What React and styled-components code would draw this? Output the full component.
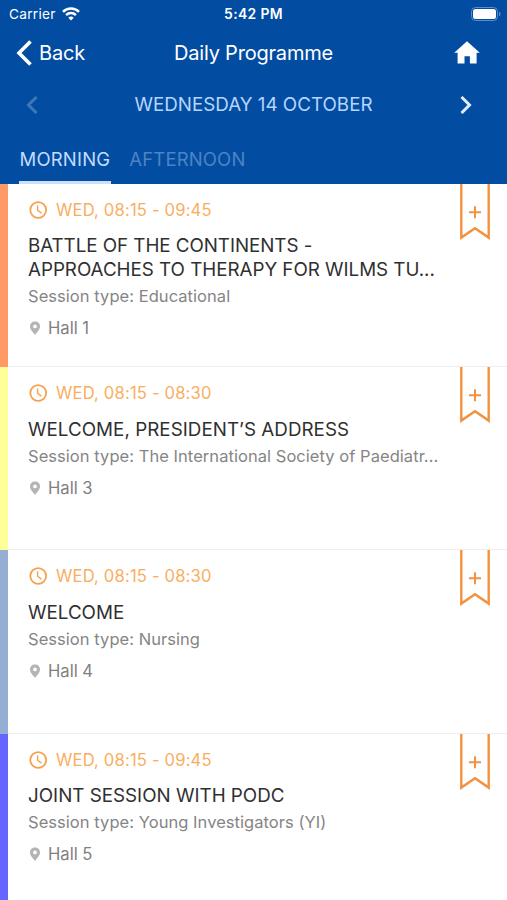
import React from 'react';
import styled, { createGlobalStyle } from 'styled-components';

const GlobalStyle = createGlobalStyle`
  * { box-sizing: border-box; }
  body { margin: 0; background: #fff; font-family: Inter, 'Liberation Sans', sans-serif; }
`;

const Screen = styled.div`
  width: 507px;
  height: 900px;
  overflow: hidden;
  background: #fff;
  display: flex;
  flex-direction: column;
`;

const Header = styled.header`
  height: 184px;
  flex: none;
  background: #024da1;
  color: #fff;
`;

const Bar = styled.div`
  display: grid;
  grid-template-columns: minmax(0, 1fr) auto minmax(0, 1fr);
  align-items: center;
  height: ${(p) => p.$height}px;
`;

const Side = styled.div`
  display: flex;
  align-items: center;
  gap: ${(p) => p.$gap || 0}px;
  justify-content: ${(p) => (p.$end ? 'flex-end' : 'flex-start')};
  padding: 0 ${(p) => p.$inset}px;
`;

const Label = styled.span`
  font-size: ${(p) => p.$size}px;
  font-weight: ${(p) => p.$weight || 400};
  letter-spacing: ${(p) => p.$spacing || 0}px;
  color: ${(p) => p.$color || 'inherit'};
  white-space: nowrap;
  line-height: 24px;
`;

const DateLabel = styled(Label)`
  padding-top: 1px;
`;

const Tabs = styled.nav`
  display: flex;
  gap: 18px;
  height: 53px;
  padding-left: 19px;
`;

const Tab = styled.div`
  height: 53px;
  padding: 16px 0.5px 0;
  border-bottom: 3px solid ${(p) => (p.$active ? '#cfe0fb' : 'transparent')};
  color: ${(p) => (p.$active ? '#c4dcff' : '#4c84c4')};
  font-size: 18.5px;
  line-height: 24px;
  letter-spacing: ${(p) => p.$spacing}px;
  white-space: nowrap;
`;

const Row = styled.article`
  flex: none;
  height: 183.2px;
  display: flex;
  border-left: 8px solid ${(p) => p.$color};
`;

const Body = styled.div`
  flex: 1;
  min-width: 0;
  padding: 14px 17px 0 20px;
  display: flex;
  justify-content: space-between;
  border-bottom: 1px solid #eeeeef;
`;

const Details = styled.div`
  min-width: 0;
`;

const Time = styled.div`
  display: flex;
  align-items: center;
  gap: 8px;
  height: 24px;
  color: #f9ae5f;
  font-size: 16.6px;
  letter-spacing: 0.17px;
`;

const Title = styled.h2`
  margin: 12.4px 0 0;
  font-size: 18.8px;
  font-weight: 400;
  line-height: 24px;
  color: #303030;
  white-space: nowrap;
`;

const TitleLine = styled.span`
  display: block;
  letter-spacing: ${(p) => p.$spacing}px;
`;

const Session = styled.div`
  margin-top: 3.1px;
  color: #858585;
  font-size: 16.5px;
  line-height: 22px;
  white-space: nowrap;
  letter-spacing: 0.05px;
`;

const Place = styled.div`
  display: flex;
  align-items: center;
  gap: 7px;
  margin: 10px 0 0 1px;
  color: #808080;
  font-size: 16.6px;
  line-height: 22px;
`;

const Bookmark = styled.svg`
  flex: none;
  display: block;
  margin-top: -14px;
`;

const Wifi = () => (
  <svg width="18" height="14" viewBox="0 0 18 14" fill="none" stroke="#fff" strokeWidth="2.5">
    <path d="M1 4.9a11.4 11.4 0 0 1 16 0" />
    <path d="M4.1 8.1a7 7 0 0 1 9.8 0" />
    <path d="M9 13.5 6.3 10.8a3.9 3.9 0 0 1 5.4 0z" fill="#fff" stroke="none" />
  </svg>
);

const Battery = () => (
  <svg width="30" height="14" viewBox="0 0 30 14">
    <rect x=".5" y=".5" width="26" height="13" rx="4" fill="none" stroke="#5d8fc6" />
    <rect x="2" y="2" width="23" height="10" rx="2.5" fill="#fff" />
    <path d="M28 4.7c2 .8 2 3.8 0 4.6z" fill="#5d8fc6" />
  </svg>
);

const BackIcon = () => (
  <svg width="16" height="26" viewBox="0 0 16 26" fill="none" stroke="#fff" strokeWidth="3.6">
    <path d="M14.5 1.4 3 13l11.5 11.6" />
  </svg>
);

const Chevron = ({ left }) => (
  <svg width="12" height="18" viewBox="0 0 12 18" fill="none" strokeWidth="3" stroke={left ? '#3f78ba' : '#e0edff'}>
    <path d={left ? 'M10.5 1 2.5 9l8 8' : 'M1.5 1l8 8-8 8'} />
  </svg>
);

const Home = () => (
  <svg width="26" height="23" viewBox="0 0 26 23" fill="#fff">
    <path d="M13 .3 25.8 11.7H22.6V22.5H15.9V15.3H10.5V22.5H3.6V11.7H.2Z" />
  </svg>
);

const Clock = () => (
  <svg width="20" height="20" viewBox="0 0 20 20" fill="none" stroke="#f6a14c">
    <circle cx="10.2" cy="10" r="7.9" strokeWidth="1.8" />
    <path d="M9.6 5.4v4.8l3.8 2.9" strokeWidth="1.4" />
  </svg>
);

const Pin = () => (
  <svg width="12" height="16" viewBox="0 0 12 16" fill="#b4b4b4">
    <path fillRule="evenodd" d="M6 1.5C3 1.5 1 3.6 1 6.4 1 9.8 4.3 12 6 15c1.7-3 5-5.2 5-8.6C11 3.6 9 1.5 6 1.5ZM6 4.5a1.9 1.9 0 1 1 0 3.8 1.9 1.9 0 0 1 0-3.8Z" />
  </svg>
);

const AddBookmark = () => (
  <Bookmark width="30" height="57" viewBox="0 0 30 57" fill="none" stroke="#f2913f" strokeWidth="2.4">
    <path d="M1.3 0V53.6L15 44.2 28.7 53.6V0" />
    <path d="M9 28.3h12M15 22.3v12" strokeWidth="2" />
  </Bookmark>
);

const sessions = [
  {
    color: '#ff9966', time: 'WED, 08:15 - 09:45', type: 'Educational', hall: 'Hall 1',
    title: [['BATTLE OF THE CONTINENTS -', -0.05], ['APPROACHES TO THERAPY FOR WILMS TU...', -0.03]],
  },
  {
    color: '#ffff99', time: 'WED, 08:15 - 08:30', type: 'The International Society of Paediatr...', hall: 'Hall 3',
    title: [['WELCOME, PRESIDENT’S ADDRESS', 0.03]],
  },
  {
    color: '#96aed3', time: 'WED, 08:15 - 08:30', type: 'Nursing', hall: 'Hall 4',
    title: [['WELCOME', 0]],
  },
  {
    color: '#6666ff', time: 'WED, 08:15 - 09:45', type: 'Young Investigators (YI)', hall: 'Hall 5',
    title: [['JOINT SESSION WITH PODC', 0]],
  },
];

export default function App() {
  return (
    <>
      <GlobalStyle />
      <Screen>
        <Header>
          <Bar $height={27}>
            <Side $gap={6} $inset={9}>
              <Label $size={13.7} $spacing={0.25}>Carrier</Label>
              <Wifi />
            </Side>
            <Label $size={13.9} $weight={600} $spacing={0.35}>5:42 PM</Label>
            <Side $end $inset={6}><Battery /></Side>
          </Bar>
          <Bar $height={51}>
            <Side $gap={7} $inset={16}>
              <BackIcon />
              <Label $size={20} $spacing={-0.15}>Back</Label>
            </Side>
            <Label $size={20} $spacing={-0.2}>Daily Programme</Label>
            <Side $end $inset={27}><Home /></Side>
          </Bar>
          <Bar $height={53}>
            <Side $inset={26}><Chevron left /></Side>
            <DateLabel $size={18.8} $color="#b5d5fc">WEDNESDAY 14 OCTOBER</DateLabel>
            <Side $end $inset={35}><Chevron /></Side>
          </Bar>
          <Tabs>
            <Tab $active $spacing={0.2}>MORNING</Tab>
            <Tab $spacing={0.15}>AFTERNOON</Tab>
          </Tabs>
        </Header>
        {sessions.map((s) => (
          <Row key={s.hall} $color={s.color}>
            <Body>
              <Details>
                <Time><Clock />{s.time}</Time>
                <Title>
                  {s.title.map(([text, spacing]) => (
                    <TitleLine key={text} $spacing={spacing}>{text}</TitleLine>
                  ))}
                </Title>
                <Session>Session type: {s.type}</Session>
                <Place><Pin />{s.hall}</Place>
              </Details>
              <AddBookmark />
            </Body>
          </Row>
        ))}
      </Screen>
    </>
  );
}
